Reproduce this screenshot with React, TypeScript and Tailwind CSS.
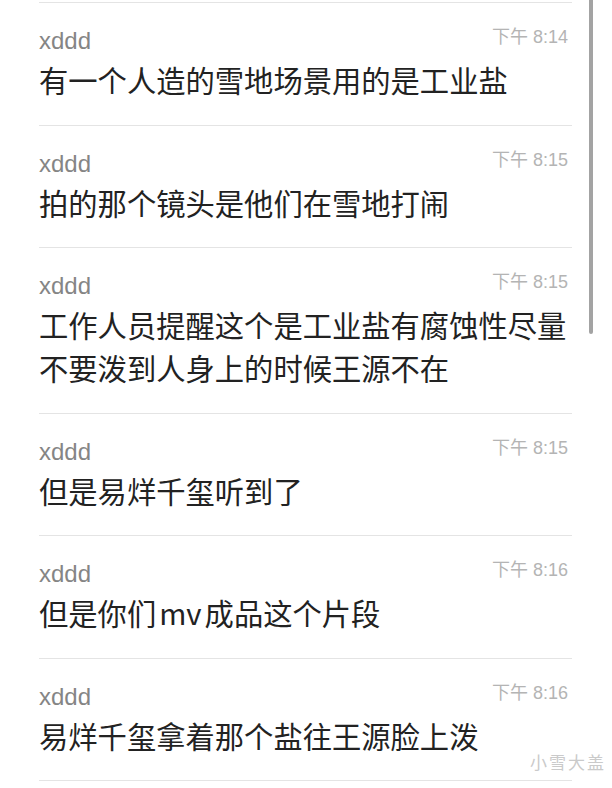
const messages = [
  { time: "下午 8:14", lines: ["有一个人造的雪地场景用的是工业盐"] },
  { time: "下午 8:15", lines: ["拍的那个镜头是他们在雪地打闹"] },
  {
    time: "下午 8:15",
    lines: ["工作人员提醒这个是工业盐有腐蚀性尽量", "不要泼到人身上的时候王源不在"],
  },
  { time: "下午 8:15", lines: ["但是易烊千玺听到了"] },
  { time: "下午 8:16", lines: ["但是你们", "mv", "成品这个片段"], inline: true },
  { time: "下午 8:16", lines: ["易烊千玺拿着那个盐往王源脸上泼"] },
];

const cjk = {
  fontFamily: '"Noto Sans CJK SC", "Noto Sans", sans-serif',
};
const latin = {
  fontFamily: '"Liberation Sans", "Noto Sans CJK SC", sans-serif',
};

const MessageRow = ({
  time,
  lines,
  inline,
  last,
}: {
  time: string;
  lines: string[];
  inline?: boolean;
  last: boolean;
}) => {
  return (
    <div
      className={`border-t border-[#e4e4e4] pt-[24px] pb-[23.5px] ${
        last ? "border-b" : ""
      }`}
    >
      <div className="flex items-start justify-between">
        <span className="text-[24px] leading-[28px] text-[#858585]" style={latin}>
          xddd
        </span>
        <span className="pr-[4px] text-[18px] leading-[20px] text-[#b4b4b4]" style={latin}>
          {time}
        </span>
      </div>
      <div className="mt-[3px] text-[29.3px] leading-[43px] text-[#222]" style={cjk}>
        {inline ? (
          <div>
            {lines[0]}
            <span className="mx-[3px]">{lines[1]}</span>
            {lines[2]}
          </div>
        ) : (
          lines.map((l, i) => <div key={i}>{l}</div>)
        )}
      </div>
    </div>
  );
};

export default function App() {
  return (
    <div className="relative h-[788px] w-[612px] overflow-hidden bg-white">
      <div className="pl-[39px] pr-[40px] pt-[2px]">
        {messages.map((m, i) => (
          <MessageRow
            key={i}
            time={m.time}
            lines={m.lines}
            inline={m.inline}
            last={i === messages.length - 1}
          />
        ))}
      </div>

      {/* scrollbar */}
      <div className="absolute left-[589px] top-0 h-[334px] w-[4px] rounded-b-full bg-[#a3a3a3]" />

      {/* watermark */}
      <div
        className="absolute left-[530px] top-[751px] text-[17px] leading-[22px] tracking-[2px] text-[#cacaca]"
        style={cjk}
      >
        小雪大盖
      </div>
    </div>
  );
}
